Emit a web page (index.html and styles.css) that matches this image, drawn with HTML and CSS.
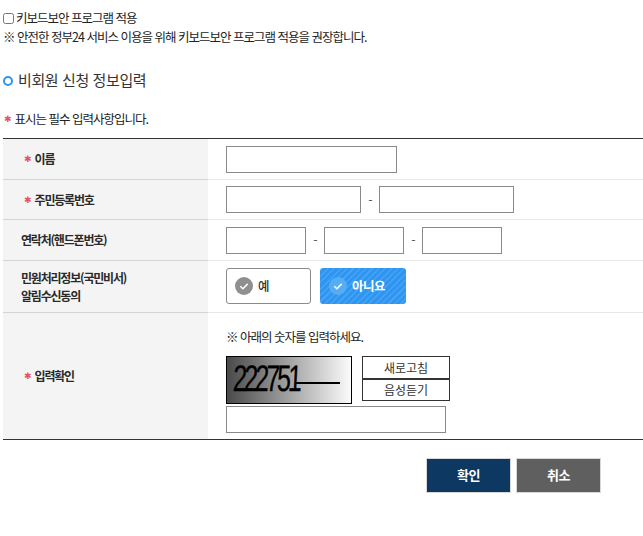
FILE: index.html
```html
<!DOCTYPE html>
<html lang="ko">
<head>
<meta charset="utf-8">
<title>비회원 신청 정보입력</title>
<link rel="stylesheet" href="styles.css">
</head>
<body>
<label class="kbd"><input type="checkbox" class="kbd-check"><span>키보드보안 프로그램 적용</span></label>
<p class="notice">※ 안전한 정부24 서비스 이용을 위해 키보드보안 프로그램 적용을 권장합니다.</p>
<h2 class="title"><span class="ring"></span>비회원 신청 정보입력</h2>
<p class="req-note"><span class="star">✱</span>표시는 필수 입력사항입니다.</p>
<div class="form">
  <div class="row r1">
    <div class="head center"><span class="star">✱</span>이름</div>
    <div class="cell"><input class="field w171" type="text"></div>
  </div>
  <div class="row r2">
    <div class="head center"><span class="star">✱</span>주민등록번호</div>
    <div class="cell"><input class="field w135" type="text"><span class="dash">-</span><input class="field w135" type="text"></div>
  </div>
  <div class="row r3">
    <div class="head left">연락처(핸드폰번호)</div>
    <div class="cell"><input class="field w80" type="text"><span class="dash">-</span><input class="field w80" type="text"><span class="dash">-</span><input class="field w80" type="text"></div>
  </div>
  <div class="row r4">
    <div class="head left two">민원처리정보(국민비서)<br>알림수신동의</div>
    <div class="cell gap9">
      <div class="choice no-sel">
        <svg class="tick" viewBox="0 0 18 18"><circle cx="9" cy="9" r="9" fill="#8f8f8f"/><path d="M5.3 9.2l2.6 2.5 4.8-4.8" fill="none" stroke="#fff" stroke-width="1.5"/></svg>
        <span>예</span>
      </div>
      <div class="choice sel">
        <svg class="tick" viewBox="0 0 18 18"><circle cx="9" cy="9" r="9" fill="#55adf6"/><path d="M5.3 9.2l2.6 2.5 4.8-4.8" fill="none" stroke="#fff" stroke-width="1.5"/></svg>
        <span>아니요</span>
      </div>
    </div>
  </div>
  <div class="row r5">
    <div class="head center"><span class="star">✱</span>입력확인</div>
    <div class="cell stack">
      <p class="cap-note">※ 아래의 숫자를 입력하세요.</p>
      <div class="cap-row">
        <div class="captcha"><span class="digits">222751</span><span class="strike"></span></div>
        <div class="cap-btns"><button class="cap-btn" type="button">새로고침</button><button class="cap-btn" type="button">음성듣기</button></div>
      </div>
      <input class="field w220" type="text">
    </div>
  </div>
</div>
<div class="actions">
  <button class="act ok" type="button">확인</button>
  <button class="act cancel" type="button">취소</button>
</div>
</body>
</html>
```
FILE: styles.css
```css
* { box-sizing: border-box; }
html, body { margin: 0; padding: 0; }
body {
  width: 643px;
  height: 536px;
  padding: 9px 0 0 3px;
  overflow: hidden;
  background: #fff;
  color: #222;
  font-family: "Noto Sans CJK KR", "Noto Sans", sans-serif;
  font-size: 12.5px;
  letter-spacing: -1px;
  line-height: 18px;
}
p, h2 { margin: 0; }
.kbd { display: flex; align-items: center; height: 18px; }
.kbd-check { width: 11px; height: 11px; margin: 1px 2px 0 0; }
.notice { margin-top: 1px; height: 18px; }
.title {
  display: flex;
  align-items: center;
  height: 24px;
  margin-top: 22px;
  font-size: 15px;
  font-weight: 400;
  letter-spacing: -0.4px;
  color: #333;
}
.ring {
  width: 10px;
  height: 10px;
  margin: 1px 5px 0 0;
  border: 2.5px solid #2e96f0;
  border-radius: 50%;
}
.req-note { margin-top: 18px; height: 18px; display: flex; align-items: center; }
.star {
  color: #e8525f;
  font-family: "DejaVu Sans", sans-serif;
  font-size: 9px;
  font-weight: 400;
  line-height: 10px;
  letter-spacing: 0;
  margin-right: 3px;
}
.req-note .star { margin-left: 1px; margin-right: 3px; }
.form { margin-top: 10px; width: 640px; border-top: 1px solid #333; border-bottom: 1px solid #333; }
.row { display: grid; grid-template-columns: 205px 435px; border-bottom: 1px solid #e8e8e8; }
.row:last-child { border-bottom: 0; }
.r1 { height: 41px; }
.r2 { height: 40px; }
.r3 { height: 41px; }
.r4 { height: 52px; }
.r5 { height: 126px; }
.head {
  display: flex;
  align-items: center;
  margin-bottom: -1px;
  background: #f4f4f4;
  border-bottom: 1px solid #d4d4d4;
  font-weight: 700;
  font-size: 12px;
  letter-spacing: -1.2px;
  color: #2a2a2a;
}
.r5 .head { border-bottom: 0; margin-bottom: 0; }
.center { padding-left: 21px; }
.left { padding-left: 18px; }
.two { line-height: 18px; }
.cell { display: flex; align-items: center; padding-left: 18px; }
.field { height: 27px; border: 1px solid #8a8a8a; background: #fff; padding: 0; display: block; }
.w171 { width: 171px; }
.w135 { width: 135px; }
.w80 { width: 80px; }
.w220 { width: 220px; }
.dash { width: 18px; text-align: center; color: #555; }
.gap9 { gap: 9px; padding-bottom: 1px; }
.choice {
  display: flex;
  align-items: center;
  height: 36px;
  border-radius: 3px;
  padding-left: 8px;
  font-size: 12.5px;
}
.no-sel { width: 85px; border: 1px solid #8a8a8a; background: #fff; color: #333; font-weight: 500; }
.sel {
  width: 86px;
  padding-left: 9px;
  color: #fff;
  font-weight: 700;
  letter-spacing: -0.5px;
  background: repeating-linear-gradient(-45deg, #2e96f0 0, #2e96f0 3px, #46a3f3 3px, #46a3f3 4.5px);
}
.tick { width: 18px; height: 18px; margin-right: 5px; flex: none; }
.stack { flex-direction: column; align-items: flex-start; padding-top: 15px; }
.cap-note { height: 18px; }
.cap-row { display: flex; margin-top: 10px; }
.captcha {
  position: relative;
  width: 126px;
  height: 48px;
  border: 1px solid #000;
  background: linear-gradient(90deg, #4a4a4a, #fbfbfb);
  overflow: hidden;
}
.digits {
  position: absolute;
  left: 7px;
  top: 2px;
  font-family: "Liberation Sans", sans-serif;
  font-size: 37px;
  line-height: 40px;
  letter-spacing: -4.4px;
  color: #000;
  -webkit-text-stroke: .3px #000;
  transform: scaleX(.68) skewX(-4deg);
  transform-origin: left top;
}
.strike {
  position: absolute;
  left: 68px;
  top: 25px;
  width: 45px;
  height: 2px;
  background: #000;
}
.cap-btns { display: flex; flex-direction: column; margin-left: 10px; }
.cap-btn {
  width: 88px;
  height: 23px;
  padding: 0;
  border: 1px solid #333;
  background: #fff;
  color: #333;
  font: inherit;
  letter-spacing: 0;
  font-size: 12px;
}
.cap-btn + .cap-btn { height: 22px; }
.cap-row + .field { margin-top: 2px; }
.actions { display: flex; gap: 5px; margin: 18px 0 0 423px; }
.act {
  width: 85px;
  height: 35px;
  padding: 0 0 2px;
  border: 1px solid #d8d8d8;
  color: #fff;
  font: inherit;
  font-weight: 700;
  font-size: 13px;
  letter-spacing: -0.5px;
}
.ok { background: #0d3862; }
.cancel { background: #5f5f5f; }
```
